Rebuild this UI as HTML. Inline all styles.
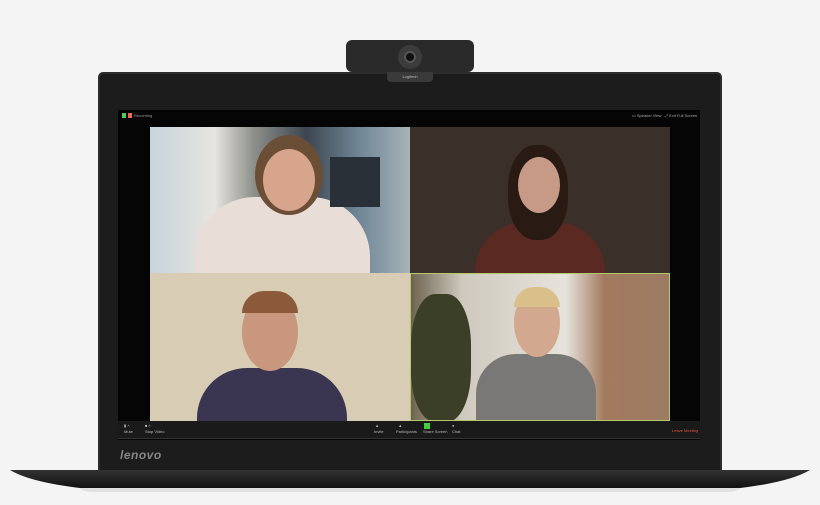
<!DOCTYPE html>
<html><head><style>
*{margin:0;padding:0;box-sizing:border-box}
body{width:820px;height:505px;background:#f4f4f4;position:relative;overflow:hidden;font-family:"Liberation Sans",sans-serif}
.a{position:absolute}
</style></head><body>
<!-- laptop lid -->
<div class="a" style="left:98px;top:72px;width:624px;height:400px;background:#1c1c1c;border-radius:5px 5px 0 0;border:2px solid #2c2c2c"></div>
<!-- screen -->
<div class="a" style="left:118px;top:110px;width:582px;height:330px;background:#050505"></div>
<div class="a" style="left:122px;top:113px;width:4px;height:5px;background:#5c5"></div>
<div class="a" style="left:128px;top:113px;width:4px;height:5px;background:#e65"></div>
<div class="a" style="left:134px;top:113px;font-size:4px;color:#999">Recording</div>
<div class="a" style="left:632px;top:113px;font-size:4px;color:#aaa">▭ Speaker View &nbsp; ⤢ Exit Full Screen</div>
<!-- tiles -->
<div class="a" style="left:150px;top:127px;width:260px;height:146px;background:linear-gradient(90deg,#c8d4dc 0%,#e6e4de 25%,#8d8f8a 40%,#3c4650 60%,#6f8595 80%,#a7b3b8 100%);overflow:hidden">
 <div class="a" style="left:45px;top:70px;width:175px;height:90px;background:#e9ddd8;border-radius:60px 60px 0 0"></div>
 <div class="a" style="left:105px;top:8px;width:68px;height:80px;background:#6b4e36;border-radius:50%"></div>
 <div class="a" style="left:113px;top:22px;width:52px;height:62px;background:#d7a48c;border-radius:50%"></div>
 <div class="a" style="left:180px;top:30px;width:50px;height:50px;background:#2a3038"></div>
</div>
<div class="a" style="left:410px;top:127px;width:260px;height:146px;background:#3a3029;overflow:hidden">
 <div class="a" style="left:65px;top:95px;width:130px;height:70px;background:#5a2a22;border-radius:50px 50px 0 0"></div>
 <div class="a" style="left:98px;top:18px;width:60px;height:95px;background:#2a1a14;border-radius:45%"></div>
 <div class="a" style="left:108px;top:30px;width:42px;height:56px;background:#c69a86;border-radius:50%"></div>
</div>
<div class="a" style="left:150px;top:273px;width:260px;height:148px;background:#d8cdb4;overflow:hidden">
 <div class="a" style="left:47px;top:95px;width:150px;height:70px;background:#3a3550;border-radius:50px 50px 0 0"></div>
 <div class="a" style="left:92px;top:20px;width:56px;height:78px;background:#c9977d;border-radius:50%"></div>
 <div class="a" style="left:92px;top:18px;width:56px;height:22px;background:#8a5a3a;border-radius:28px 28px 0 0"></div>
</div>
<div class="a" style="left:410px;top:273px;width:260px;height:148px;background:linear-gradient(90deg,#6d6450 0%,#cfc9be 20%,#e6e3dc 60%,#a27a5e 75%,#9c7b63 100%);border:1px solid #b5c86a;overflow:hidden">
 <div class="a" style="left:0;top:20px;width:60px;height:128px;background:#3c3f28;border-radius:40%"></div>
 <div class="a" style="left:65px;top:80px;width:120px;height:70px;background:#7a7876;border-radius:40px 40px 0 0"></div>
 <div class="a" style="left:103px;top:15px;width:46px;height:68px;background:#d2a98e;border-radius:50%"></div>
 <div class="a" style="left:103px;top:13px;width:46px;height:20px;background:#d9c08a;border-radius:23px 23px 0 0"></div>
</div>
<!-- toolbar -->
<div class="a" style="left:118px;top:421px;width:582px;height:18px;background:#1a1a1a;border-bottom:1px solid #333"></div>
<div class="a" style="left:124px;top:423px;font-size:4px;color:#bbb;line-height:6px">▮ ˄<br>Mute</div>
<div class="a" style="left:145px;top:423px;font-size:4px;color:#bbb;line-height:6px">■ ˄<br>Stop Video</div>
<div class="a" style="left:374px;top:423px;font-size:4px;color:#bbb;line-height:6px">&nbsp;▲<br>Invite</div>
<div class="a" style="left:396px;top:423px;font-size:4px;color:#bbb;line-height:6px">&nbsp;&nbsp;▲<br>Participants</div>
<div class="a" style="left:424px;top:423px;width:6px;height:6px;background:#4c4"></div>
<div class="a" style="left:423px;top:429px;font-size:4px;color:#bbb">Share Screen</div>
<div class="a" style="left:452px;top:423px;font-size:4px;color:#bbb;line-height:6px">●<br>Chat</div>
<div class="a" style="left:672px;top:428px;font-size:4px;color:#e5533c">Leave Meeting</div>
<div class="a" style="left:120px;top:448px;font-size:12px;font-style:italic;font-weight:bold;color:#888;letter-spacing:0.5px">lenovo</div>
<!-- base -->
<svg class="a" style="left:0;top:466px" width="820" height="32"><defs><linearGradient id="g" x1="0" y1="0" x2="0" y2="1"><stop offset="0" stop-color="#333"/><stop offset="1" stop-color="#121212"/></linearGradient></defs>
<path d="M10 4 L810 4 Q790 16 740 22 L80 22 Q30 16 10 4Z" fill="url(#g)"/>
<path d="M80 22 L740 22 Q740 26 720 26 L100 26 Q80 26 80 22Z" fill="#ccc" opacity=".5"/></svg>
<!-- webcam -->
<div class="a" style="left:346px;top:40px;width:128px;height:32px;background:#2a2a2a;border-radius:6px"></div>
<div class="a" style="left:398px;top:45px;width:24px;height:24px;background:#3c3c3c;border-radius:50%"></div>
<div class="a" style="left:404px;top:51px;width:12px;height:12px;background:#111;border-radius:50%;border:2px solid #555"></div>
<div class="a" style="left:387px;top:72px;width:46px;height:10px;background:#3a3a3a;border-radius:0 0 4px 4px;font-size:4px;color:#bbb;text-align:center;line-height:10px">Logitech</div>
</body></html>
